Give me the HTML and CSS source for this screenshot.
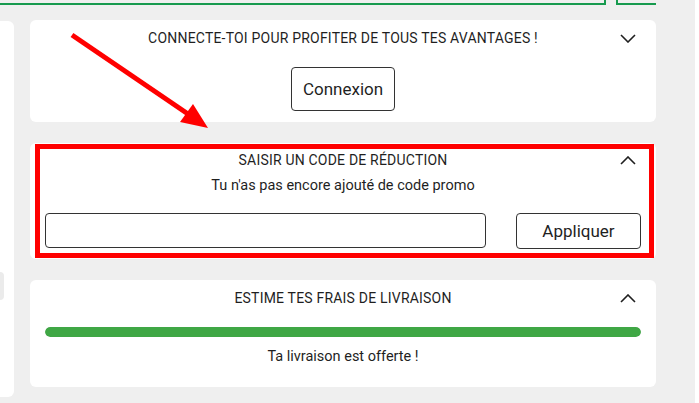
FILE: index.html
```html
<!DOCTYPE html>
<html lang="fr">
<head>
  <meta charset="UTF-8">
  <meta name="viewport" content="width=device-width, initial-scale=1.0">
  <title>Panier</title>
  <link rel="stylesheet" href="styles.css">
</head>
<body>
  <div class="page">
    <div class="shell">
      <div class="topbar">
        <div class="tab tab-main"></div>
        <div class="tab tab-side"></div>
      </div>

      <div class="layout">
        <aside class="side">
          <div class="side-field"></div>
        </aside>

        <main class="main">
          <!-- Login -->
          <section class="card card-login">
            <div class="card-head">
              <h3>Connecte-toi pour profiter de tous tes avantages !</h3>
              <svg class="chevron" width="16" height="9" viewBox="0 0 16 9"><path d="M1 1 L8 8 L15 1"/></svg>
            </div>
            <button class="btn btn-login">Connexion</button>
          </section>

          <!-- Promo code -->
          <section class="card card-promo">
            <div class="card-head">
              <h3>Saisir un code de réduction</h3>
              <svg class="chevron" width="16" height="9" viewBox="0 0 16 9"><path d="M1 8 L8 1 L15 8"/></svg>
            </div>
            <p class="card-text">Tu n'as pas encore ajouté de code promo</p>
            <div class="promo-row">
              <input type="text" class="promo-input">
              <button class="btn btn-apply">Appliquer</button>
            </div>
            <div class="highlight"></div>
          </section>

          <!-- Shipping -->
          <section class="card card-ship">
            <div class="card-head">
              <h3>Estime tes frais de livraison</h3>
              <svg class="chevron" width="16" height="9" viewBox="0 0 16 9"><path d="M1 8 L8 1 L15 8"/></svg>
            </div>
            <div class="progress"><div class="progress-fill" style="width: 100%"></div></div>
            <p class="card-text ship-text">Ta livraison est offerte !</p>
          </section>
        </main>
      </div>
    </div>
    <div class="edge"></div>
  </div>

  <!-- annotation arrow -->
  <svg class="arrow" width="699" height="403" viewBox="0 0 699 403">
    <line x1="72" y1="35" x2="188" y2="114" stroke="#ff0000" stroke-width="5"/>
    <polygon points="208,128 193,104 180,122" fill="#ff0000"/>
  </svg>
</body>
</html>
```

FILE: styles.css
```css
body {
  margin: 0;
  background: #efefef;
  font-family: Roboto, "Liberation Sans", sans-serif;
  color: #1f1f1f;
  width: 699px;
  height: 403px;
  overflow: hidden;
  position: relative;
}
.page {
  display: flex;
  height: 403px;
}
.shell {
  width: 695px;
}
.edge {
  width: 4px;
  background: #fff;
}
.topbar {
  display: flex;
  height: 5px;
}
.tab {
  box-sizing: border-box;
  height: 5px;
  border-bottom: 2px solid #179a4e;
}
.tab-main {
  width: 606px;
  border-right: 2px solid #179a4e;
}
.tab-side {
  width: 40px;
  margin-left: 10px;
  border-left: 2px solid #179a4e;
}
.layout {
  display: flex;
  gap: 16px;
  margin-top: 15px;
}
.side {
  width: 14px;
  height: 376px;
  margin-top: 1px;
  background: #fff;
  border-radius: 0 6px 6px 0;
}
.side-field {
  width: 4px;
  height: 28px;
  margin-top: 251px;
  background: #ebebeb;
  border-radius: 0 4px 4px 0;
}
.main {
  width: 626px;
  display: flex;
  flex-direction: column;
  gap: 21px;
}
.card {
  position: relative;
  background: #fff;
  border-radius: 6px;
  box-sizing: border-box;
}
.card-head {
  display: grid;
  grid-template-columns: 1fr auto 1fr;
  align-items: center;
  height: 20px;
}
.card-head h3 {
  grid-column: 2;
  margin: 0;
  font-size: 14px;
  font-weight: 400;
  text-transform: uppercase;
  letter-spacing: 0.2px;
  line-height: 20px;
  white-space: nowrap;
}
.chevron {
  grid-column: 3;
  justify-self: end;
  margin-right: 20px;
  fill: none;
  stroke: #1f1f1f;
  stroke-width: 1.6;
}
.card-text {
  margin: 0;
  font-size: 14.5px;
  line-height: 20px;
  text-align: center;
}
.btn {
  font-family: Roboto, "Liberation Sans", sans-serif;
  font-size: 17px;
  color: #1f1f1f;
  background: #fff;
  border: 1px solid #333;
  border-radius: 4px;
  cursor: pointer;
}
.card-login {
  height: 102px;
  padding-top: 8px;
}
.btn-login {
  display: block;
  width: 104px;
  height: 44px;
  margin: 19px auto 0;
}
.card-promo {
  height: 116px;
  padding: 7px 15px 0;
}
.card-promo .card-head {
  margin: 0 -15px;
}
.card-promo .card-text {
  margin-top: 6px;
}
.promo-row {
  display: flex;
  gap: 30px;
  margin-top: 17px;
}
.promo-input {
  flex: 1;
  height: 35px;
  box-sizing: border-box;
  border: 1px solid #333;
  border-radius: 4px;
}
.btn-apply {
  width: 125px;
  height: 36px;
}
.highlight {
  position: absolute;
  top: 1px;
  left: 5px;
  right: 2px;
  bottom: 1px;
  border: 5px solid #ff0000;
}
.card-ship {
  height: 107px;
  padding-top: 8px;
}
.progress {
  height: 10px;
  margin: 19px 15px 0;
  background: #e4e4e4;
  border-radius: 5px;
  overflow: hidden;
}
.progress-fill {
  height: 100%;
  background: #3fa745;
  border-radius: 5px;
}
.ship-text {
  margin-top: 10px;
}
.arrow {
  position: absolute;
  top: 0;
  left: 0;
  pointer-events: none;
}
```
